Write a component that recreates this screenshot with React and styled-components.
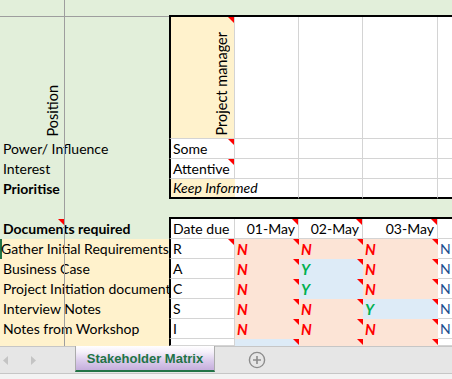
import styled, { createGlobalStyle } from "styled-components";

const GREEN = "#e2efda";
const PEACH = "#fff2cc";
const NO = "#fce4d6";
const YES = "#ddebf7";
const GRID = "#d4d4d4";
const FREEZE = "#9e9e9e";
const EXCEL = "#217346";

const GlobalStyle = createGlobalStyle`
  html, body {
    margin: 0;
    padding: 0;
    background: #ffffff;
  }
  body {
    width: 452px;
    height: 379px;
    overflow: hidden;
  }
`;

const Window = styled.div`
  width: 452px;
  height: 379px;
  display: flex;
  flex-direction: column;
  overflow: hidden;
`;

const Sheet = styled.div`
  position: relative;
  display: grid;
  grid-template-columns: 65px 104px 66px 64px 64px 75px 60px;
  grid-template-rows: 17px 122px repeat(10, 20px) 7px;
  width: 452px;
  height: 346px;
  overflow: hidden;
  font-family: Lato, "Liberation Sans", sans-serif;
  font-size: 14px;
  color: #000000;
`;

// grey line of the frozen panes, drawn over the text
const FreezeLine = styled.div`
  position: absolute;
  left: 64px;
  top: 0;
  bottom: 0;
  width: 1px;
  background: ${FREEZE};
  z-index: 3;
`;

const Cell = styled.div`
  position: relative;
  box-sizing: border-box;
  grid-column: span ${(p) => p.$span || 1};
  display: flex;
  align-items: center;
  min-width: 0;
  padding: 0 3px 0 2px;
  white-space: nowrap;
  line-height: 18px;
  background: ${(p) => p.$fill || "transparent"};
`;

const Band = styled(Cell)`
  border-bottom: ${(p) =>
    p.$rule === "black"
      ? "2px solid #000"
      : p.$rule === "freeze"
      ? `1px solid ${FREEZE}`
      : "0"};
`;

const Label = styled(Cell)`
  padding-left: ${(p) => (p.$pl != null ? p.$pl : 3)}px;
  font-weight: ${(p) => (p.$bold ? 700 : 400)};
  overflow: hidden;
  box-shadow: ${(p) => (p.$sel ? `inset 2px 0 ${EXCEL}` : "none")};
`;

const Grid = styled(Cell)`
  border-right: ${(p) => (p.$open ? "0" : `1px solid ${GRID}`)};
  border-bottom: ${(p) => (p.$thick ? "2px solid #000" : `1px solid ${GRID}`)};
  border-left: ${(p) => (p.$edge ? "2px solid #000" : "0")};
  justify-content: ${(p) => (p.$right ? "flex-end" : "flex-start")};
  font-style: ${(p) => (p.$italic ? "italic" : "normal")};
  color: ${(p) => p.$ink || "#000000"};
`;

const HeadCell = styled(Grid)`
  align-items: flex-end;
  justify-content: flex-end;
  padding: 0 3px 2px 0;
`;

const TitleCell = styled(Cell)`
  align-items: flex-end;
  justify-content: flex-end;
  padding: 0 3px 2px 0;
`;

const Turned = styled.span`
  writing-mode: vertical-rl;
  transform: rotate(180deg);
  line-height: 18px;
  font-size: 14.5px;
`;

const Mark = styled(Cell)`
  background: ${(p) => (p.$yes ? YES : NO)};
  color: ${(p) => (p.$yes ? "#00b050" : "#ff0000")};
  font-weight: 700;
  font-style: italic;
  font-size: 15px;
`;

// red comment indicator in the top right corner of a cell
const Corner = styled.span`
  position: absolute;
  top: 0;
  ${(p) => (p.$left != null ? `left: ${p.$left}px;` : "right: 0;")}
  width: 0;
  height: 0;
  border-top: 6px solid #ff0000;
  border-left: 6px solid transparent;
  z-index: 1;
`;

const TabStrip = styled.div`
  box-sizing: border-box;
  height: 28px;
  display: flex;
  align-items: flex-start;
  background: #e6e6e6;
  border-top: 1px solid #c6c6c6;
  border-bottom: 1px solid #c6c6c6;
`;

const Scrollers = styled.div`
  box-sizing: border-box;
  width: 75px;
  height: 26px;
  display: flex;
  align-items: center;
  gap: 21px;
  padding-left: 3px;
`;

const Tab = styled.div`
  box-sizing: border-box;
  margin-top: -1px;
  width: 140px;
  height: 26px;
  display: flex;
  align-items: center;
  justify-content: center;
  border-left: 1px solid #ababab;
  border-right: 1px solid #ababab;
  border-bottom: 2px solid ${EXCEL};
  background: linear-gradient(#ffffff 0%, #f5f0fa 25%, #dacbeb 62%, #c5aedc 100%);
  font: 700 13px "Liberation Sans", Arial, sans-serif;
  color: ${EXCEL};
`;

const AddSheet = styled.svg`
  margin: 4px 0 0 33px;
`;

const Foot = styled.div`
  height: 5px;
  background: #f3f3f3;
`;

const profile = [
  { label: "Power/ Influence", value: "Some", note: true },
  { label: "Interest", value: "Attentive", note: true },
  { label: "Prioritise", value: "Keep Informed", bold: true, last: true },
];

const dates = ["01-May", "02-May", "03-May"];

// the last row is cut off by the sheet tabs, only its fills show
const docs = [
  { name: "Gather Initial Requirements", raci: "R", days: ["N", "N", "N"], next: "N", note: true, sel: true },
  { name: "Business Case", raci: "A", days: ["N", "Y", "N"], next: "N" },
  { name: "Project Initiation document", raci: "C", days: ["N", "Y", "N"], next: "N" },
  { name: "Interview Notes", raci: "S", days: ["N", "N", "Y"], next: "N" },
  { name: "Notes from Workshop", raci: "I", days: ["N", "N", "N"], next: "N" },
  { name: "", raci: "", days: ["Y", "N", "N"], next: "", cut: true },
];

function Arrow({ dir }) {
  return (
    <svg width="6" height="9" viewBox="0 0 6 9">
      <path d={dir === "left" ? "M5 0 L0 4.5 L5 9 Z" : "M1 0 L6 4.5 L1 9 Z"} fill="#c4c4c4" />
    </svg>
  );
}

export default function App() {
  return (
    <Window>
      <GlobalStyle />
      <Sheet>
        <FreezeLine />

        <Band $span={2} $fill={GREEN} $rule="freeze" />
        <Band $span={5} $fill={GREEN} $rule="black" />

        <TitleCell $fill={GREEN}>
          <Turned>Position</Turned>
        </TitleCell>
        <Cell $fill={GREEN} />
        <HeadCell $fill={PEACH} $edge>
          <Turned>Project manager</Turned>
          <Corner />
        </HeadCell>
        <Grid />
        <Grid />
        <Grid />
        <Grid />

        {profile.map((row) => (
          <>
            <Label key={row.label} $span={2} $fill={GREEN} $bold={row.bold}>
              {row.label}
            </Label>
            <Grid $edge $fill={row.last ? PEACH : undefined} $thick={row.last} $open={row.last} $italic={row.last}>
              {row.value}
              {row.note && <Corner />}
            </Grid>
            <Grid $thick={row.last} />
            <Grid $thick={row.last} />
            <Grid $thick={row.last} />
            <Grid $thick={row.last} />
          </>
        ))}

        <Band $span={2} $fill={GREEN} />
        <Band $span={5} $fill={GREEN} $rule="black" />

        <Label $span={2} $fill={GREEN} $bold>
          Documents required
          <Corner $left={58} />
        </Label>
        <Grid $edge>Date due</Grid>
        {dates.map((d) => (
          <Grid key={d} $right>
            {d}
            <Corner />
          </Grid>
        ))}
        <Grid />

        {docs.map((doc, i) => (
          <>
            <Label key={"doc" + i} $span={2} $fill={PEACH} $pl={doc.sel ? 1 : 3} $sel={doc.sel}>
              {doc.name}
            </Label>
            <Grid $edge>
              {doc.raci}
              {doc.note && <Corner />}
            </Grid>
            {doc.days.map((v, j) => (
              <Mark key={j} $yes={v === "Y"}>
                {doc.cut ? null : v}
                <Corner />
              </Mark>
            ))}
            <Grid $ink="#1d4f8f">{doc.next}</Grid>
          </>
        ))}
      </Sheet>

      <TabStrip>
        <Scrollers>
          <Arrow dir="left" />
          <Arrow dir="right" />
        </Scrollers>
        <Tab>Stakeholder Matrix</Tab>
        <AddSheet width="18" height="18" viewBox="0 0 18 18">
          <circle cx="9" cy="9" r="7.6" fill="none" stroke="#8c8c8c" strokeWidth="1.4" />
          <path d="M9 5 V13 M5 9 H13" stroke="#8c8c8c" strokeWidth="1.6" />
        </AddSheet>
      </TabStrip>
      <Foot />
    </Window>
  );
}
